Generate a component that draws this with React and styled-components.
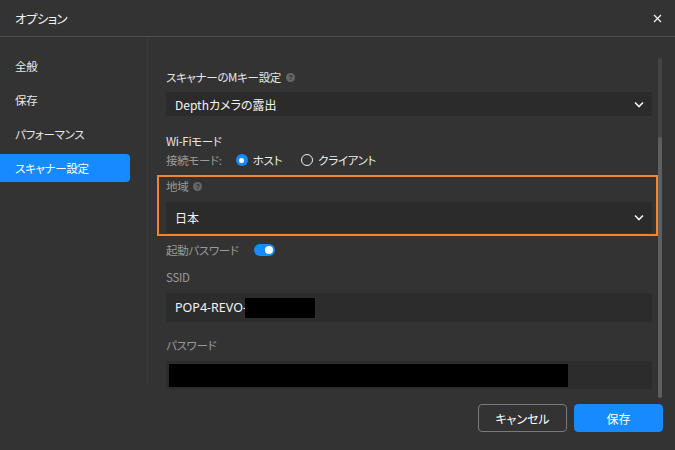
import React from "react";
import styled, { createGlobalStyle } from "styled-components";

const GlobalStyle = createGlobalStyle`
  html, body {
    margin: 0;
    padding: 0;
    background: #333333;
  }
  * {
    box-sizing: border-box;
  }
`;

const Dialog = styled.div`
  width: 675px;
  height: 450px;
  display: flex;
  flex-direction: column;
  background: #333333;
  color: #ffffff;
  font-family: "Noto Sans CJK JP", "Noto Sans", sans-serif;
  font-feature-settings: "palt";
  overflow: hidden;
`;

const Header = styled.div`
  height: 37px;
  flex: none;
  display: flex;
  align-items: center;
  justify-content: space-between;
  padding: 0 8px 0 15px;
  border-bottom: 1px solid #4d4d4d;
`;

const Title = styled.div`
  font-size: 12.5px;
  letter-spacing: -0.6px;
  color: #f2f2f2;
`;

const CloseButton = styled.button`
  width: 20px;
  height: 20px;
  padding: 0;
  border: none;
  background: none;
  display: flex;
  align-items: center;
  justify-content: center;
  cursor: pointer;
`;

const Main = styled.div`
  flex: 1;
  display: flex;
  min-height: 0;
`;

const Sidebar = styled.nav`
  width: 148px;
  flex: none;
  padding-top: 15px;
  display: flex;
  flex-direction: column;
  gap: 6px;
  border-right: 1px solid #3b3b3b;
  margin-bottom: 15px;
`;

const NavItem = styled.div`
  width: 130px;
  height: 28px;
  display: flex;
  align-items: center;
  padding-left: 15px;
  font-size: 11.5px;
  letter-spacing: -0.3px;
  border-radius: 0 4px 4px 0;
  background: ${(p) => (p.$active ? "#168bff" : "transparent")};
  color: ${(p) => (p.$active ? "#ffffff" : "#e8e8e8")};
`;

const Content = styled.div`
  flex: 1;
  padding: 32px 6px 0 18px;
  display: flex;
  flex-direction: column;
`;

const Label = styled.div`
  font-size: 11.5px;
  letter-spacing: -0.3px;
  line-height: 16px;
  height: 16px;
  color: ${(p) => (p.$dim ? "#9a9a9a" : "#e6e6e6")};
  display: flex;
  align-items: center;
  gap: 5px;
  margin-top: ${(p) => p.$mt || 0}px;
`;

const Help = styled.span`
  width: 9px;
  height: 9px;
  border-radius: 50%;
  background: #666666;
  color: #2e2e2e;
  font-size: 7px;
  line-height: 9px;
  text-align: center;
  font-weight: bold;
  letter-spacing: 0;
  font-family: "Liberation Sans", sans-serif;
`;

const Select = styled.div`
  height: ${(p) => p.$h || 30}px;
  margin-top: ${(p) => p.$mt || 8}px;
  background: #2b2b2b;
  display: flex;
  align-items: center;
  justify-content: space-between;
  padding: 0 8px 0 9px;
  font-size: 12px;
  color: #f4f4f4;
`;

const Input = styled.div`
  height: ${(p) => p.$h || 29}px;
  margin-top: 8px;
  background: #2c2c2c;
  display: flex;
  align-items: center;
  padding: 0 3px 0 9px;
  font-family: "Noto Sans", sans-serif;
  font-size: 12.5px;
  color: #f4f4f4;
`;

const Redacted = styled.span`
  display: inline-block;
  background: #000;
  height: ${(p) => p.$h}px;
  width: ${(p) => p.$w}px;
  margin-left: ${(p) => p.$ml || 0}px;
`;

const RadioRow = styled.div`
  display: flex;
  align-items: center;
  height: 16px;
  margin-top: 3px;
  font-size: 11.5px;
  letter-spacing: -0.3px;
  line-height: 16px;
`;

const RadioOption = styled.label`
  display: flex;
  align-items: center;
  gap: 5px;
  margin-left: ${(p) => p.$ml}px;
  color: #eeeeee;
`;

const RadioDot = styled.span`
  width: 12px;
  height: 12px;
  border-radius: 50%;
  display: flex;
  align-items: center;
  justify-content: center;
  background: ${(p) => (p.$on ? "#168bff" : "transparent")};
  border: ${(p) => (p.$on ? "none" : "1.5px solid #f0f0f0")};

  &::after {
    content: "";
    display: ${(p) => (p.$on ? "block" : "none")};
    width: 5px;
    height: 5px;
    border-radius: 50%;
    background: #fff;
  }
`;

const Highlight = styled.div`
  margin: 7px -6px 0 -9px;
  padding: 1px 4px 1px 7px;
  border: 2px solid #f5852a;
`;

const ToggleRow = styled.div`
  display: flex;
  align-items: center;
  height: 16px;
  gap: 15px;
  margin-top: 6px;
`;

const Toggle = styled.span`
  width: 21px;
  height: 12px;
  border-radius: 6px;
  background: #168bff;
  display: flex;
  align-items: center;
  justify-content: flex-end;
  padding-right: 2px;

  &::after {
    content: "";
    width: 8px;
    height: 8px;
    border-radius: 50%;
    background: #fff;
  }
`;

const ScrollTrack = styled.div`
  width: 4px;
  flex: none;
  margin: 21px 13px 0 0;
  border-radius: 2px;
  background: #444444;
  display: flex;
  flex-direction: column;
  justify-content: flex-end;
`;

const ScrollThumb = styled.div`
  height: 261px;
  border-radius: 2px;
  background: #5f5f5f;
`;

const Footer = styled.div`
  height: 52px;
  flex: none;
  display: flex;
  justify-content: flex-end;
  align-items: flex-start;
  gap: 7px;
  padding: 6px 12px 0 0;
`;

const Button = styled.button`
  width: 89px;
  height: 28px;
  border-radius: 4px;
  font-family: "Noto Sans CJK JP", sans-serif;
  font-feature-settings: "palt";
  font-size: 12px;
  color: #fff;
  cursor: pointer;
  border: 1px solid ${(p) => (p.$primary ? "#168bff" : "#7a7a7a")};
  background: ${(p) => (p.$primary ? "#168bff" : "transparent")};
`;

const Chevron = () => (
  <svg width="10" height="7" viewBox="0 0 10 7">
    <polyline points="1,1.5 5,5.5 9,1.5" fill="none" stroke="#f2f2f2" strokeWidth="1.6" />
  </svg>
);

const navItems = ["全般", "保存", "パフォーマンス", "スキャナー設定"];

export default function App() {
  return (
    <>
      <GlobalStyle />
      <Dialog>
        <Header>
          <Title>オプション</Title>
          <CloseButton>
            <svg width="9" height="9" viewBox="0 0 9 9">
              <path d="M1 1L8 8M8 1L1 8" stroke="#eee" strokeWidth="1.3" />
            </svg>
          </CloseButton>
        </Header>
        <Main>
          <Sidebar>
            {navItems.map((n, i) => (
              <NavItem key={n} $active={i === 3}>
                {n}
              </NavItem>
            ))}
          </Sidebar>
          <Content>
            <Label>
              スキャナーのMキー設定 <Help>?</Help>
            </Label>
            <Select $h={24} $mt={7}>
              <span>Depthカメラの露出</span>
              <Chevron />
            </Select>
            <Label $mt={17}>Wi-Fiモード</Label>
            <RadioRow>
              <Label $dim>接続モード:</Label>
              <RadioOption $ml={14}>
                <RadioDot $on />
                ホスト
              </RadioOption>
              <RadioOption $ml={19}>
                <RadioDot />
                クライアント
              </RadioOption>
            </RadioRow>
            <Highlight>
              <Label $dim>
                地域 <Help>?</Help>
              </Label>
              <Select $h={31} $mt={8}>
                <span>日本</span>
                <Chevron />
              </Select>
            </Highlight>
            <ToggleRow>
              <Label $dim>起動パスワード</Label>
              <Toggle />
            </ToggleRow>
            <Label $dim $mt={11}>
              SSID
            </Label>
            <Input>
              POP4-REVO-
              <Redacted $w={70} $h={20} $ml={-2} />
            </Input>
            <Label $dim $mt={15}>
              パスワード
            </Label>
            <Input $h={28}>
              <Redacted $w={399} $h={23} $ml={-6} />
            </Input>
          </Content>
          <ScrollTrack>
            <ScrollThumb />
          </ScrollTrack>
        </Main>
        <Footer>
          <Button>キャンセル</Button>
          <Button $primary>保存</Button>
        </Footer>
      </Dialog>
    </>
  );
}
